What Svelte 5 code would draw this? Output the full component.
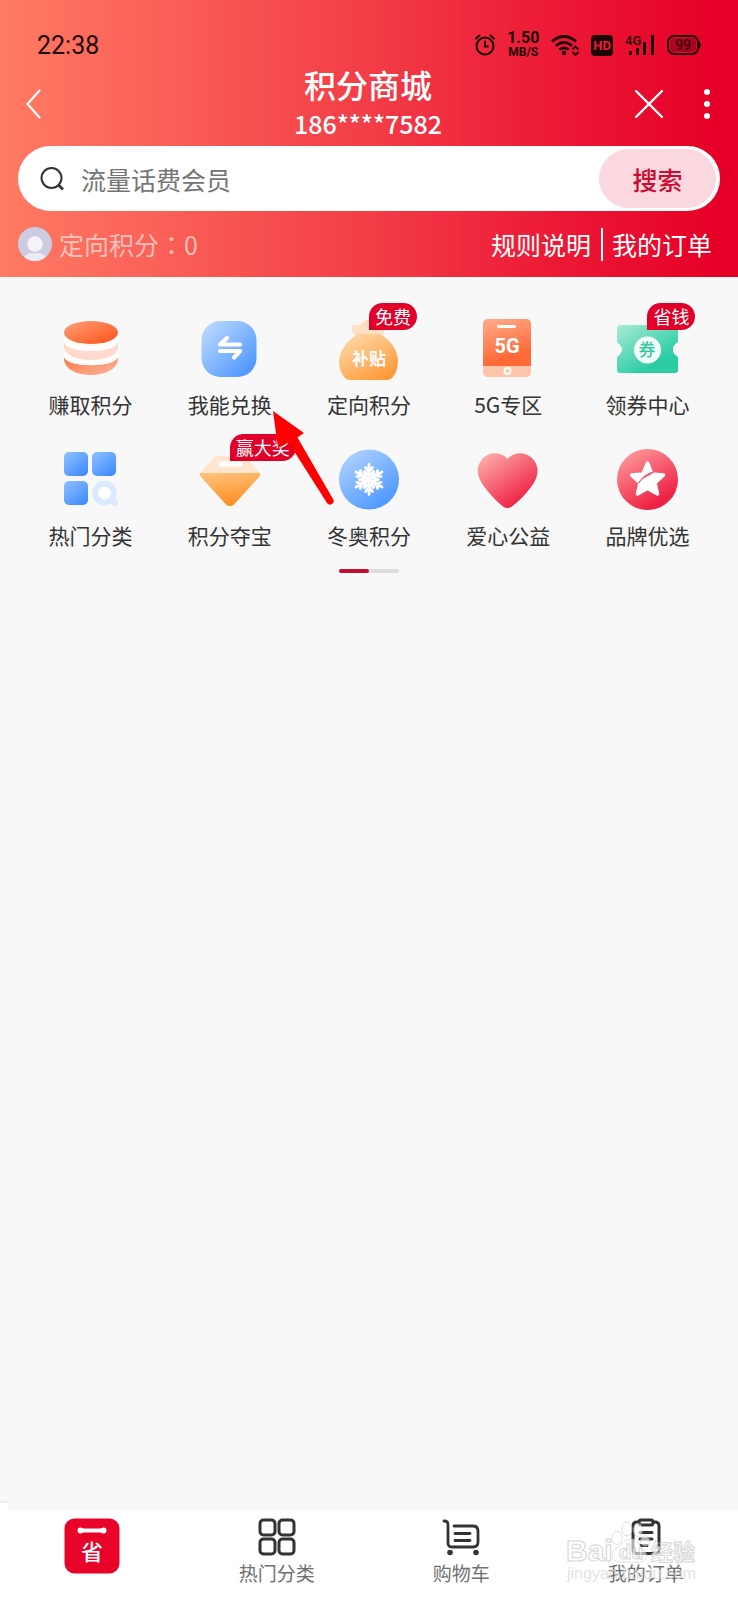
<script lang="ts">
  interface MenuItem {
    label: string;
    icon: string;
    badge?: string;
  }

  const menu: MenuItem[] = [
    { label: '赚取积分', icon: 'coins' },
    { label: '我能兑换', icon: 'swap' },
    { label: '定向积分', icon: 'bag', badge: '免费' },
    { label: '5G专区', icon: 'phone' },
    { label: '领券中心', icon: 'ticket', badge: '省钱' },
    { label: '热门分类', icon: 'grid' },
    { label: '积分夺宝', icon: 'diamond', badge: '赢大奖' },
    { label: '冬奥积分', icon: 'snow' },
    { label: '爱心公益', icon: 'heart' },
    { label: '品牌优选', icon: 'star' }
  ];

  const spokes = [0, 60, 120, 180, 240, 300];

  let keyword = $state('');
</script>

<div class="page">
  <header>
    <div class="status">
      <span class="clock">22:38</span>
      <div class="status-icons">
        <svg width="20" height="22" viewBox="0 0 20 22" fill="none" stroke="currentColor" stroke-width="2" stroke-linecap="round">
          <circle cx="10" cy="12" r="8.5" />
          <path d="M10 7.5V12.5H13M1 4.5L4.5 1.5M19 4.5L15.5 1.5" />
        </svg>
        <span class="speed"><b>1.50</b><small>MB/S</small></span>
        <svg width="28" height="22" viewBox="0 0 28 22" fill="none" stroke="currentColor" stroke-width="2.8">
          <path d="M1 7.5Q13 -2.5 25 7.5M5 11.8Q13 5 21 11.8M8.5 15.8Q13 12 17.5 15.8" />
          <circle cx="13" cy="19" r="2.2" fill="currentColor" stroke="none" />
          <path d="M21.5 15.5L24.5 12.5L27.5 15.5M21.5 18L24.5 21L27.5 18" stroke-width="1.8" />
        </svg>
        <span class="hd">HD</span>
        <svg width="30" height="22" viewBox="0 0 30 22" fill="currentColor">
          <text x="0" y="11" class="net">4G</text>
          <rect x="4" y="17" width="3" height="4" />
          <rect x="11" y="14" width="3" height="7" />
          <rect x="18" y="8" width="3" height="13" />
          <rect x="26" y="1" width="3" height="20" />
        </svg>
        <svg width="34" height="20" viewBox="0 0 34 20">
          <rect x="1" y="1" width="30" height="18" rx="6" fill="none" stroke="currentColor" stroke-width="2" />
          <rect x="3" y="3" width="26" height="14" rx="4" fill="#000" opacity="0.25" />
          <path d="M32 6.5Q35 10 32 13.5Z" fill="currentColor" stroke="currentColor" />
          <text x="16" y="15" text-anchor="middle" class="level">99</text>
        </svg>
      </div>
    </div>

    <div class="nav">
      <button class="plain" aria-label="返回">
        <svg width="15" height="30" viewBox="0 0 15 30" fill="none" stroke="#fff" stroke-width="2.2" stroke-linecap="round" stroke-linejoin="round">
          <path d="M13.5 1.5L1.5 15L13.5 28.5" />
        </svg>
      </button>
      <div class="title">
        <h1>积分商城</h1>
        <p>186****7582</p>
      </div>
      <div class="nav-right">
        <button class="plain" aria-label="关闭">
          <svg width="28" height="28" viewBox="0 0 28 28" stroke="#fff" stroke-width="2.4" stroke-linecap="round">
            <path d="M1 1L27 27M27 1L1 27" />
          </svg>
        </button>
        <button class="plain" aria-label="更多">
          <svg width="6" height="30" viewBox="0 0 6 30" fill="#fff">
            <circle cx="3" cy="3" r="3" />
            <circle cx="3" cy="15" r="3" />
            <circle cx="3" cy="27" r="3" />
          </svg>
        </button>
      </div>
    </div>

    <form class="search" onsubmit={(e) => e.preventDefault()}>
      <svg width="24" height="24" viewBox="0 0 24 24" fill="none" stroke="#333" stroke-width="2">
        <circle cx="11.5" cy="11" r="10" />
        <path d="M18.5 18L23 22.5" stroke-width="2.6" />
      </svg>
      <input type="text" bind:value={keyword} placeholder="流量话费会员" aria-label="搜索" />
      <button type="submit">搜索</button>
    </form>

    <div class="info">
      <svg width="34" height="34" viewBox="0 0 34 34">
        <clipPath id="face"><circle cx="17" cy="17" r="17" /></clipPath>
        <g clip-path="url(#face)">
          <rect width="34" height="34" fill="#cdcbe0" />
          <ellipse cx="17" cy="33" rx="12" ry="7.5" fill="#ebeaf3" />
          <circle cx="17" cy="17" r="8.5" fill="#f4f3f8" stroke="#cdcbe0" stroke-width="1.5" />
        </g>
      </svg>
      <span class="points">定向积分<span class="colon">：</span>0</span>
      <div class="links">
        <a href="#rules">规则说明</a>
        <a href="#orders">我的订单</a>
      </div>
    </div>
  </header>

  <main>
    <nav class="menu">
      {#each menu as item}
        <a class="item" href="#{item.icon}">
          <span class="icon">
            <svg width="62" height="62" viewBox="0 0 62 62">
              {#if item.icon === 'coins'}
                <linearGradient id="coinTop" x1="0" y1="0" x2="1" y2="1">
                  <stop offset="0.1" stop-color="#ff9770" /><stop offset="0.9" stop-color="#fd5a1f" />
                </linearGradient>
                <linearGradient id="coinLow" x1="0" y1="0" x2="1" y2="1">
                  <stop offset="0" stop-color="#fa7445" /><stop offset="1" stop-color="#fdb99c" />
                </linearGradient>
                <path d="M4 24C7 36 55 36 58 24V30C55 46 7 46 4 30Z" fill="#ffd9cb" />
                <path d="M4 39C7 50 55 50 58 39V42C55 62 7 62 4 42Z" fill="url(#coinLow)" />
                <path d="M4 31C7 46 55 46 58 31V39C55 50 7 50 4 39Z" fill="#fff" opacity="0.7" />
                <path d="M4 16C7 32 55 32 58 16V24C55 36 7 36 4 24Z" fill="#fff" opacity="0.7" />
                <ellipse cx="31" cy="14.5" rx="27" ry="11.5" fill="url(#coinTop)" />
              {:else if item.icon === 'swap'}
                <linearGradient id="swapBg" x1="0" y1="0" x2="1" y2="1">
                  <stop offset="0.05" stop-color="#bedaff" /><stop offset="0.85" stop-color="#559bff" />
                </linearGradient>
                <rect x="2.5" y="3" width="55" height="56" rx="19" fill="url(#swapBg)" />
                <path d="M41 26.500H21L28 20M21 33H41L35 39.500" fill="none" stroke="#fff" stroke-width="4.200" stroke-linecap="round" stroke-linejoin="round" />
              {:else if item.icon === 'bag'}
                <linearGradient id="bagBg" x1="0.1" y1="0" x2="0.8" y2="1">
                  <stop offset="0" stop-color="#ffdcae" /><stop offset="1" stop-color="#ff9735" />
                </linearGradient>
                <path d="M18 19C13 13 12 6 18 7Q21 8 24 5Q30 -2 36 5L45 10Q48 14 43 19Z" fill="#ffe0c2" />
                <path d="M20 16H42C56 24 60 35 60 44Q60 53 54 60Q52 62 49 62H12Q9 62 7 60Q1 53 1 44C1 34 8 23 20 16Z" fill="url(#bagBg)" />
                <text x="31" y="47" text-anchor="middle" class="bag-text">补贴</text>
              {:else if item.icon === 'phone'}
                <linearGradient id="phoneBg" x1="0" y1="0" x2="0.3" y2="1">
                  <stop offset="0" stop-color="#ffac8c" /><stop offset="0.9" stop-color="#ff6a38" />
                </linearGradient>
                <path d="M6 48V6Q6 1 11 1H49Q54 1 54 6V48Z" fill="url(#phoneBg)" />
                <path d="M6 48H54V54Q54 59 49 59H11Q6 59 6 54Z" fill="#ffc5a8" />
                <path d="M21.5 8.5H37.5" stroke="#fff" stroke-width="3" stroke-linecap="round" />
                <circle cx="30.5" cy="53" r="3" fill="none" stroke="#fff" stroke-width="2" />
                <text x="30" y="35" text-anchor="middle" class="phone-text">5G</text>
              {:else if item.icon === 'ticket'}
                <linearGradient id="ticketBg" x1="0" y1="0" x2="0.8" y2="1">
                  <stop offset="0" stop-color="#a9ebd6" /><stop offset="0.8" stop-color="#2bcda5" />
                </linearGradient>
                <path d="M4 7H59Q62 7 62 10V24Q56 28 57 31.5Q56 35 62 39V52Q62 55 59 55H4Q1 55 1 52V39Q6 35 6 31.5Q6 28 1 24V10Q1 7 4 7Z" fill="url(#ticketBg)" />
                <circle cx="31.5" cy="32" r="13.5" fill="#f2fffb" />
                <text x="31" y="38" text-anchor="middle" class="ticket-text">券</text>
              {:else if item.icon === 'grid'}
                <linearGradient id="gridBg" x1="0" y1="0" x2="0.8" y2="1">
                  <stop offset="0" stop-color="#8fc1ff" /><stop offset="1" stop-color="#428cff" />
                </linearGradient>
                <rect x="4" y="3" width="24" height="24" rx="5" fill="url(#gridBg)" />
                <rect x="32" y="3" width="24" height="24" rx="5" fill="url(#gridBg)" />
                <rect x="4" y="32" width="24" height="24" rx="5" fill="url(#gridBg)" />
                <path d="M51 51L55 54" stroke="#dceaff" stroke-width="6" stroke-linecap="round" />
                <circle cx="44.5" cy="44" r="9.500" fill="#fff" stroke="#dceaff" stroke-width="6" />
              {:else if item.icon === 'diamond'}
                <linearGradient id="gemBg" x1="0.3" y1="0" x2="0.6" y2="1">
                  <stop offset="0" stop-color="#ffc078" /><stop offset="1" stop-color="#ff8b1e" />
                </linearGradient>
                <path d="M1 24L14 9Q16 7 19 7H43Q46 7 48 9L61 24Z" fill="#ffe6d0" />
                <path d="M22 15H41" stroke="#fff" stroke-width="5" stroke-linecap="round" />
                <path d="M1 24H61Q62 26 60 28L35 55.5Q31 59 27 55.5L2 28Q0 26 1 24Z" fill="url(#gemBg)" />
              {:else if item.icon === 'snow'}
                <linearGradient id="snowBg" x1="0.1" y1="0" x2="0.8" y2="1">
                  <stop offset="0" stop-color="#b5d5ff" /><stop offset="0.9" stop-color="#519aff" />
                </linearGradient>
                <circle cx="31" cy="30.5" r="30" fill="url(#snowBg)" />
                <g fill="none" stroke="#fff" stroke-width="2.8" stroke-linecap="round">
                  {#each spokes as angle}
                    <path d="M31 30.5V15.500M31 22.500L27.500 18.500M31 22.500L34.500 18.500M31 27L26.500 22.500M31 27L35.500 22.500" transform="rotate({angle} 31 30.5)" />
                  {/each}
                </g>
              {:else if item.icon === 'heart'}
                <linearGradient id="heartBg" x1="0.05" y1="0" x2="0.8" y2="1">
                  <stop offset="0" stop-color="#ffb3af" /><stop offset="0.85" stop-color="#ee2949" />
                </linearGradient>
                <path d="M30.5 10C36 3 48 2 55 9C64 18 61 29 54 38C48 46 42 52 35 57.5Q30.5 60.5 26 57.5C18 51 11 43 6 36C0 27 -2 18 6 9C13 2 25 3 30.5 10Z" fill="url(#heartBg)" />
              {:else}
                <linearGradient id="starBg" x1="0.1" y1="0" x2="0.7" y2="1">
                  <stop offset="0" stop-color="#ff9fa0" /><stop offset="0.9" stop-color="#ee2244" />
                </linearGradient>
                <circle cx="31.5" cy="30.5" r="30.5" fill="url(#starBg)" />
                <path d="M31.5 14L36 25L47.5 26L39 34L41.5 45L31.5 39.5L21.5 45L24 34L15.5 26L27 25Z" fill="#fff" stroke="#fff" stroke-width="3.5" stroke-linejoin="round" />
                <path d="M22.500 34Q27 26 38 22.500Q34 26 31 27Q26 29 22.500 34Z" fill="#f4566d" stroke="#f4566d" />
              {/if}
            </svg>
            {#if item.badge}
              <span class="badge">{item.badge}</span>
            {/if}
          </span>
          <span class="label">{item.label}</span>
        </a>
      {/each}
      <svg class="pointer" width="62" height="94" viewBox="0 0 62 94" aria-hidden="true">
        <path d="M0 0L31 22L22 28L5 37Z" fill="#fe0000" />
        <path d="M14 29L23 24L60 88A3.500 3.500 0 0 1 54 92Z" fill="#fe0000" />
      </svg>
    </nav>
    <div class="pager"><i></i></div>
  </main>

  <nav class="tabs">
    <a href="#home" aria-label="省">
      <svg width="56" height="56" viewBox="0 0 56 56">
        <rect x="0.5" y="0.5" width="55" height="55" rx="10" fill="#e80428" />
        <path d="M17 12.5H39" stroke="#fff" stroke-width="4" />
        <circle cx="16.5" cy="12.5" r="3" fill="#fff" />
        <circle cx="39.5" cy="12.5" r="3" fill="#fff" />
        <text x="28" y="42" text-anchor="middle" class="home-text">省</text>
      </svg>
    </a>
    <a href="#category">
      <svg width="38" height="38" viewBox="0 0 38 38" fill="none" stroke="#333" stroke-width="3">
        <rect x="2" y="2" width="15" height="15" rx="3.5" />
        <rect x="21" y="2" width="15" height="15" rx="3.5" />
        <rect x="2" y="21" width="15" height="15" rx="3.5" />
        <rect x="21" y="21" width="15" height="15" rx="3.5" />
      </svg>
      <span>热门分类</span>
    </a>
    <a href="#cart">
      <svg width="38" height="38" viewBox="0 0 38 38" fill="none" stroke="#333" stroke-width="2.8" stroke-linecap="round">
        <path d="M2 3Q6 3 6 7V25Q6 29 10 29H31Q36 29 36 24V13Q36 8 31 8H12M13 15.5H28M13 22.5H28" />
        <circle cx="8" cy="34.5" r="2.8" fill="#333" stroke="none" />
        <circle cx="34" cy="34.5" r="2.8" fill="#333" stroke="none" />
      </svg>
      <span>购物车</span>
    </a>
    <a href="#orders">
      <svg width="38" height="38" viewBox="0 0 38 38" fill="none" stroke="#333" stroke-width="3" stroke-linecap="round">
        <path d="M12 4H10Q6 4 6 8V31Q6 35.5 10 35.5H28Q32 35.5 32 31V8Q32 4 28 4H26M13 14.5H25M13 21H25M14 27.5H20" />
        <rect x="12" y="2" width="14" height="5" rx="2" />
      </svg>
      <span>我的订单</span>
    </a>
    <svg class="mark" width="136" height="72" viewBox="0 0 136 72" aria-hidden="true">
      <g fill="#fff" stroke="#ccc" stroke-width="1" opacity="0.75">
        <ellipse cx="61" cy="18" rx="5" ry="7" transform="translate(0 -8)" />
        <ellipse cx="51" cy="19" rx="5" ry="6.5" />
        <ellipse cx="72" cy="11" rx="4.5" ry="6.5" />
        <ellipse cx="79" cy="22" rx="4.5" ry="5" />
        <path d="M65 20Q71 19 74 27Q82 33 80 39Q77 45 68 43H57Q46 44 46 36Q47 30 54 27Q58 20 65 20Z" />
      </g>
      <text x="0" y="42" class="mark-big">Bai</text>
      <text x="53" y="40" class="mark-du">du</text>
      <text x="85" y="41" class="mark-cn">经验</text>
      <text x="1" y="60" class="mark-url">jingyan.baidu.com</text>
    </svg>
  </nav>
</div>

<style>
  :global(body) {
    background: #f8f8f8;
  }

  .page {
    display: flex;
    flex-direction: column;
    min-height: 100vh;
    font-family: 'Noto Sans CJK SC', 'Noto Sans', sans-serif;
    color: #333;
  }

  a {
    color: inherit;
    text-decoration: none;
  }

  svg {
    display: block;
    flex-shrink: 0;
  }

  header {
    background: linear-gradient(90deg, #ff7b63, #f33d47 50%, #ec1935 75%, #e60027 97%);
  }

  .status {
    display: flex;
    align-items: center;
    justify-content: space-between;
    height: 32px;
    padding: 29px 37px 0;
    color: #1c0507;
    font-family: Roboto, sans-serif;
  }

  .clock {
    padding-top: 2px;
    font-size: 25px;
    line-height: 32px;
  }

  .status-icons {
    display: flex;
    align-items: center;
    gap: 12px;
  }

  .speed {
    display: flex;
    flex-direction: column;
    align-items: center;
  }

  .speed b {
    font-size: 16px;
    line-height: 14px;
  }

  .speed small {
    font-size: 12px;
    line-height: 14px;
    font-weight: 700;
  }

  .hd {
    padding: 0 2px;
    border-radius: 4px;
    background: #1c0507;
    color: #ee1c38;
    font-size: 13px;
    font-weight: 700;
    line-height: 21px;
  }

  .net {
    font-size: 13px;
    font-weight: 500;
  }

  .level {
    font-size: 14px;
    fill: #1c0507;
  }

  .nav {
    display: grid;
    grid-template-columns: 1fr auto 1fr;
    align-items: center;
    height: 85px;
    padding: 0 28px 0 26px;
    color: #fff;
  }

  .plain {
    padding: 0;
    border: none;
    background: none;
    cursor: pointer;
    justify-self: start;
  }

  .title {
    padding-bottom: 4px;
    text-align: center;
  }

  h1 {
    margin: 0;
    font-size: 32px;
    font-weight: 500;
    line-height: 42px;
  }

  p {
    margin: 0;
    font-size: 25px;
    font-weight: 500;
    line-height: 36px;
  }

  .nav-right {
    display: flex;
    align-items: center;
    justify-content: flex-end;
    gap: 41px;
  }

  .search {
    display: flex;
    align-items: center;
    height: 65px;
    box-sizing: border-box;
    margin: 0 18px;
    padding: 3px 4px 3px 22px;
    border-radius: 33px;
    background: #fff;
  }

  .search input {
    flex: 1;
    min-width: 0;
    margin-left: 17px;
    padding: 0;
    border: none;
    outline: none;
    background: none;
    color: #333;
    font: inherit;
    font-size: 25px;
    line-height: 36px;
  }

  .search input::placeholder {
    color: #757575;
    opacity: 1;
  }

  .search button {
    align-self: stretch;
    width: 117px;
    border: none;
    border-radius: 30px;
    background: #fbd8df;
    color: #cf0a30;
    font: inherit;
    font-size: 25px;
    font-weight: 500;
    cursor: pointer;
  }

  .info {
    display: flex;
    align-items: center;
    height: 66px;
    padding: 0 26px 0 18px;
    color: #fff;
  }

  .points {
    flex: 1;
    margin-left: 7px;
    color: rgba(255, 255, 255, 0.6);
    font-size: 25px;
    line-height: 33px;
  }

  /* the TC face centres the full-width colon */
  .colon {
    font-family: 'Noto Sans CJK TC', sans-serif;
  }

  .links {
    display: flex;
    font-size: 25px;
    line-height: 33px;
  }

  .links a + a {
    margin-left: 10px;
    padding-left: 9px;
    border-left: 2px solid #fff;
  }

  main {
    flex: 1;
  }

  .menu {
    position: relative;
    display: grid;
    grid-template-columns: repeat(5, 1fr);
    row-gap: 31px;
    padding: 41px 21px 0;
  }

  .item {
    display: flex;
    flex-direction: column;
    align-items: center;
    gap: 10px;
  }

  .icon {
    position: relative;
  }

  .badge {
    position: absolute;
    left: 50%;
    top: -15px;
    padding: 0 6px;
    border-radius: 14px 14px 14px 0;
    background: #e0002a;
    color: #fff;
    font-size: 18px;
    line-height: 27px;
    white-space: nowrap;
  }

  .label {
    font-size: 21px;
    line-height: 28px;
    white-space: nowrap;
  }

  .pointer {
    position: absolute;
    left: 37%;
    top: 134px;
  }

  .pager {
    width: 60px;
    height: 4px;
    margin: 20px auto 0;
    border-radius: 2px;
    background: #ddd;
  }

  .pager i {
    display: block;
    width: 50%;
    height: 100%;
    border-radius: 2px;
    background: #c30d31;
  }

  .bag-text,
  .ticket-text,
  .phone-text {
    font-weight: 700;
    fill: #fff;
  }

  .bag-text {
    font-size: 17px;
  }

  .phone-text {
    font-family: Roboto, sans-serif;
    font-size: 20px;
  }

  .ticket-text {
    font-size: 17px;
    font-weight: 500;
    fill: #35c9a3;
  }

  .tabs {
    position: relative;
    display: grid;
    grid-template-columns: repeat(4, 1fr);
    height: 90px;
    background: #fff;
  }

  .tabs::before {
    content: '';
    position: absolute;
    left: 0;
    top: -9px;
    width: 8px;
    height: 9px;
    border-top: 2px solid #eee;
    box-sizing: border-box;
    background: #fff;
  }

  .tabs a {
    display: flex;
    flex-direction: column;
    align-items: center;
    gap: 3px;
    padding-top: 8px;
    color: #707070;
    font-size: 19px;
    line-height: 28px;
  }

  .home-text {
    font-size: 22px;
    font-weight: 500;
    fill: #fff;
  }

  .mark {
    position: absolute;
    right: 36px;
    top: 9px;
    pointer-events: none;
    opacity: 0.8;
  }

  .mark text {
    fill: #fff;
    stroke: #ccc;
    stroke-width: 1px;
    font-family: 'Liberation Sans', 'Noto Sans CJK SC', sans-serif;
    font-weight: 700;
  }

  .mark .mark-big {
    font-size: 30px;
  }

  .mark .mark-du {
    font-size: 20px;
  }

  .mark .mark-cn {
    font-size: 22px;
  }

  .mark .mark-url {
    font-size: 16px;
    font-weight: 400;
    stroke: none;
    fill: #ddd;
  }
</style>
